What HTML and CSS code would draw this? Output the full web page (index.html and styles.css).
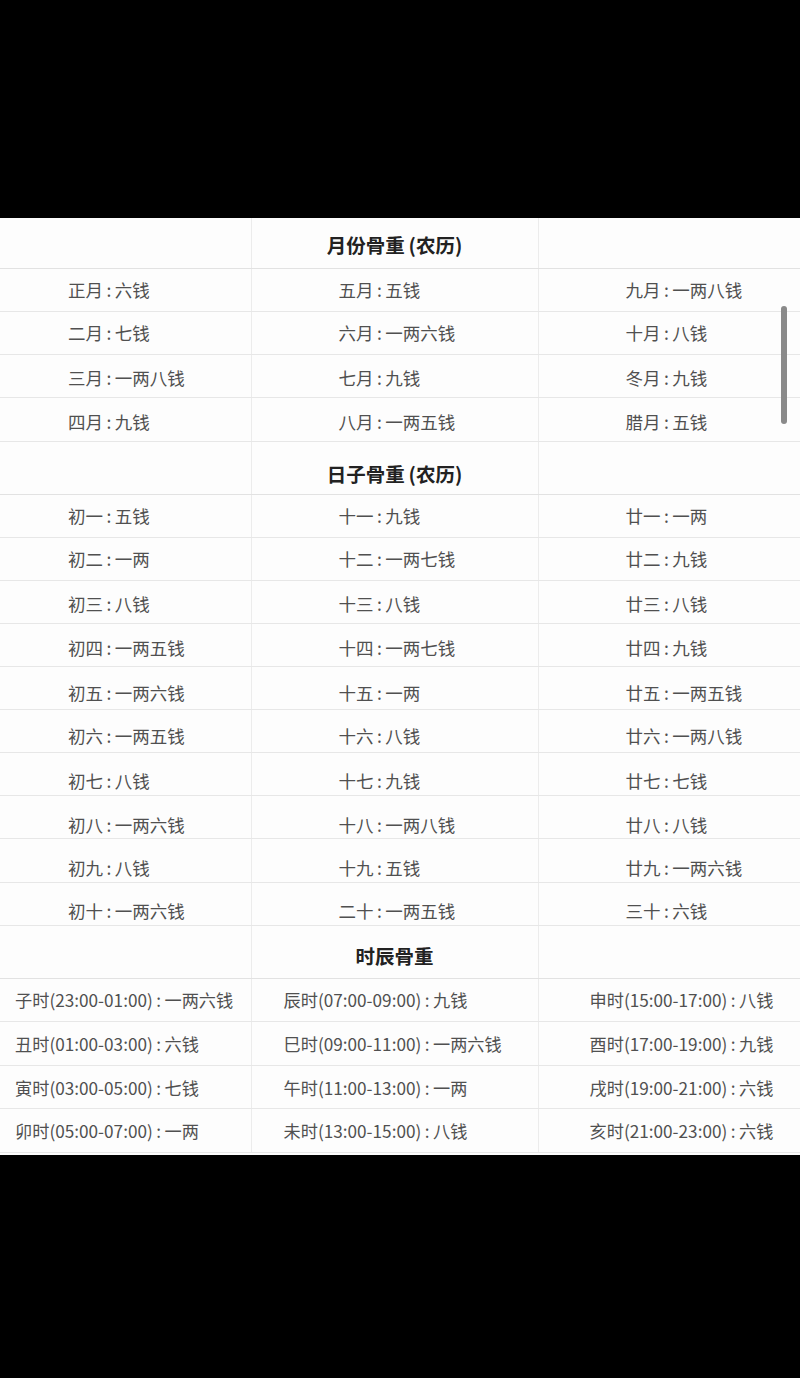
FILE: index.html
```html
<!DOCTYPE html>
<html lang="zh-CN">
<head>
<meta charset="utf-8">
<title>骨重表</title>
<link rel="stylesheet" href="styles.css">
</head>
<body>
<div class="top-band"></div>
<div class="sheet">
  <table class="weights">
    <colgroup>
      <col class="c1"><col class="c2"><col class="c3">
    </colgroup>
    <tbody class="sec sec-month">
      <tr class="head first"><td></td><td class="title">月份骨重&thinsp;(农历)</td><td></td></tr>
      <tr><td>正月&thinsp;:&thinsp;六钱</td><td>五月&thinsp;:&thinsp;五钱</td><td>九月&thinsp;:&thinsp;一两八钱</td></tr>
      <tr><td>二月&thinsp;:&thinsp;七钱</td><td>六月&thinsp;:&thinsp;一两六钱</td><td>十月&thinsp;:&thinsp;八钱</td></tr>
      <tr><td>三月&thinsp;:&thinsp;一两八钱</td><td>七月&thinsp;:&thinsp;九钱</td><td>冬月&thinsp;:&thinsp;九钱</td></tr>
      <tr><td>四月&thinsp;:&thinsp;九钱</td><td>八月&thinsp;:&thinsp;一两五钱</td><td>腊月&thinsp;:&thinsp;五钱</td></tr>
    </tbody>
    <tbody class="sec sec-day">
      <tr class="head"><td></td><td class="title">日子骨重&thinsp;(农历)</td><td></td></tr>
      <tr><td>初一&thinsp;:&thinsp;五钱</td><td>十一&thinsp;:&thinsp;九钱</td><td>廿一&thinsp;:&thinsp;一两</td></tr>
      <tr><td>初二&thinsp;:&thinsp;一两</td><td>十二&thinsp;:&thinsp;一两七钱</td><td>廿二&thinsp;:&thinsp;九钱</td></tr>
      <tr><td>初三&thinsp;:&thinsp;八钱</td><td>十三&thinsp;:&thinsp;八钱</td><td>廿三&thinsp;:&thinsp;八钱</td></tr>
      <tr><td>初四&thinsp;:&thinsp;一两五钱</td><td>十四&thinsp;:&thinsp;一两七钱</td><td>廿四&thinsp;:&thinsp;九钱</td></tr>
      <tr><td>初五&thinsp;:&thinsp;一两六钱</td><td>十五&thinsp;:&thinsp;一两</td><td>廿五&thinsp;:&thinsp;一两五钱</td></tr>
      <tr><td>初六&thinsp;:&thinsp;一两五钱</td><td>十六&thinsp;:&thinsp;八钱</td><td>廿六&thinsp;:&thinsp;一两八钱</td></tr>
      <tr><td>初七&thinsp;:&thinsp;八钱</td><td>十七&thinsp;:&thinsp;九钱</td><td>廿七&thinsp;:&thinsp;七钱</td></tr>
      <tr><td>初八&thinsp;:&thinsp;一两六钱</td><td>十八&thinsp;:&thinsp;一两八钱</td><td>廿八&thinsp;:&thinsp;八钱</td></tr>
      <tr><td>初九&thinsp;:&thinsp;八钱</td><td>十九&thinsp;:&thinsp;五钱</td><td>廿九&thinsp;:&thinsp;一两六钱</td></tr>
      <tr><td>初十&thinsp;:&thinsp;一两六钱</td><td>二十&thinsp;:&thinsp;一两五钱</td><td>三十&thinsp;:&thinsp;六钱</td></tr>
    </tbody>
    <tbody class="sec sec-hour">
      <tr class="head"><td></td><td class="title">时辰骨重</td><td></td></tr>
      <tr><td>子时(23:00-01:00)&thinsp;:&thinsp;一两六钱</td><td>辰时(07:00-09:00)&thinsp;:&thinsp;九钱</td><td>申时(15:00-17:00)&thinsp;:&thinsp;八钱</td></tr>
      <tr><td>丑时(01:00-03:00)&thinsp;:&thinsp;六钱</td><td>巳时(09:00-11:00)&thinsp;:&thinsp;一两六钱</td><td>酉时(17:00-19:00)&thinsp;:&thinsp;九钱</td></tr>
      <tr><td>寅时(03:00-05:00)&thinsp;:&thinsp;七钱</td><td>午时(11:00-13:00)&thinsp;:&thinsp;一两</td><td>戌时(19:00-21:00)&thinsp;:&thinsp;六钱</td></tr>
      <tr><td>卯时(05:00-07:00)&thinsp;:&thinsp;一两</td><td>未时(13:00-15:00)&thinsp;:&thinsp;八钱</td><td>亥时(21:00-23:00)&thinsp;:&thinsp;六钱</td></tr>
    </tbody>
  </table>
  <div class="scrollbar"></div>
</div>
</body>
</html>
```

FILE: styles.css
```css
html, body {
  margin: 0;
  padding: 0;
  background: #000;
  width: 800px;
  height: 1378px;
  overflow: hidden;
}

.top-band {
  height: 218px;
}

.sheet {
  position: relative;
  background: #fdfdfd;
  height: 937px;
  overflow: hidden;
}

.weights {
  width: 800px;
  border-collapse: collapse;
  table-layout: fixed;
  font-family: "Noto Sans CJK SC", "Noto Sans", sans-serif;
  font-size: 17.5px;
  color: #505050;
}

.c1 { width: 251px; }
.c2 { width: 287px; }
.c3 { width: 262px; }

.weights td {
  padding: 0;
  border-bottom: 1px solid #e7e7e7;
  border-right: 1px solid #ececec;
  white-space: nowrap;
  vertical-align: middle;
  box-sizing: border-box;
}

.weights td:last-child {
  border-right: none;
}

.sec-month tr {
  height: 43.3px;
}

.sec-day tr {
  height: 43.1px;
}

.sec-hour tr {
  height: 43.6px;
  font-size: 17.2px;
}

.weights tr.head {
  height: 53px;
  font-size: 17.5px;
}

.weights tr.head.first {
  height: 50px;
}

.weights tr.head td {
  border-bottom: 1.5px solid #e2e2e2;
}

.weights td.title {
  text-align: center;
  font-weight: 700;
  font-size: 19.5px;
  color: #222;
}

.sec-month .head td.title { padding-top: 4px; }
.sec-day .head td.title { padding-top: 12px; }
.sec-hour .head td.title { padding-top: 7px; }

.sec-month tr:not(.head) td:nth-child(1),
.sec-day tr:not(.head) td:nth-child(1) { padding-left: 68px; }
.sec-month tr:not(.head) td:nth-child(2),
.sec-day tr:not(.head) td:nth-child(2) { padding-left: 87px; }
.sec-month tr:not(.head) td:nth-child(3),
.sec-day tr:not(.head) td:nth-child(3) { padding-left: 87px; }

.sec-month tr:nth-child(n+4) td { padding-top: 3px; }

.sec-day tr:nth-child(n+4) td { padding-top: 4px; }
.sec-day tr:nth-child(n+6) td { padding-top: 8px; }
.sec-day tr:nth-child(n+8) td { padding-top: 12px; }
.sec-day tr:nth-child(n+9) td { padding-top: 14px; }

.sec-hour tr:not(.head) td:nth-child(1) { padding-left: 15px; }
.sec-hour tr:not(.head) td:nth-child(2) { padding-left: 32px; }
.sec-hour tr:not(.head) td:nth-child(3) { padding-left: 51px; }

.scrollbar {
  position: absolute;
  left: 781px;
  top: 88px;
  width: 6px;
  height: 118px;
  border-radius: 3px;
  background: #8a8a8a;
}
```
